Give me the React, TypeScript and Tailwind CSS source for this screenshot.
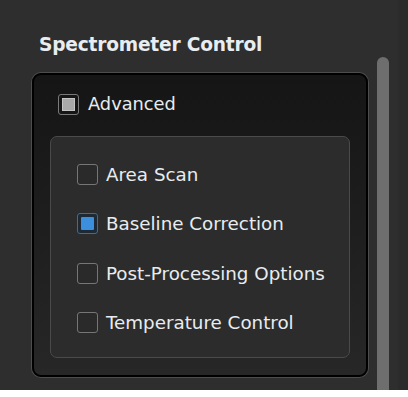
const options = [
  { label: 'Area Scan', checked: false },
  { label: 'Baseline Correction', checked: true },
  { label: 'Post-Processing Options', checked: false },
  { label: 'Temperature Control', checked: false },
];

const Box = ({ checked }: { checked: boolean }) => (
  <div
    className={
      checked
        ? 'w-[21px] h-[21px] shrink-0 rounded-[3px] border border-[#3a6d9a] bg-[#1d2a36] p-[3px]'
        : 'w-[21px] h-[21px] shrink-0 rounded-[3px] border border-[#767676] bg-[#2a2a2a]'
    }
  >
    {checked && <div className="w-full h-full rounded-[1px] bg-[#3b8fdc]" />}
  </div>
);

const App = () => {
  return (
    <div
      className="w-[408px] h-[397px] bg-white overflow-hidden"
      style={{ fontFamily: '"DejaVu Sans", Verdana, sans-serif' }}
    >
      <div className="h-[390px] bg-[#2e2e2e] flex">
        <div className="w-[377px] pl-[32px] pr-[9px] pt-[33px]">
          <h2 className="pl-[7px] text-[18.6px] leading-[24px] font-bold text-[#e8edf2] tracking-[-0.2px]">
            Spectrometer Control
          </h2>

          <div className="mt-[16px] h-[304px] rounded-[9px] border-2 border-black shadow-[0_0_0_1px_#4d4d4d] bg-gradient-to-b from-[#151515] to-[#272727] pt-[17px] px-[16px]">
            <div className="flex items-center gap-[9px] pl-[8px]">
              <div className="w-[21px] h-[21px] rounded-[3px] border border-[#7a7a7a] bg-[#161616] p-[3px]">
                <div className="w-full h-full bg-[#a9a9a9] border border-[#c4c4c4]" />
              </div>
              <span className="text-[17.8px] leading-[24px] text-[#e8ecf0]">Advanced</span>
            </div>

            <div className="mt-[20px] h-[222px] rounded-[7px] border border-[#4a4a4a] bg-[#2c2c2c] pl-[26px] pt-[27px] flex flex-col gap-[28.3px]">
              {options.map((o) => (
                <div key={o.label} className="flex items-center gap-[8px]">
                  <Box checked={o.checked} />
                  <span className="text-[18.3px] leading-[21px] text-[#e8ecf0] whitespace-nowrap">
                    {o.label}
                  </span>
                </div>
              ))}
            </div>
          </div>
        </div>

        <div className="w-[12px] mt-[57px] rounded-t-full bg-[#6e6e6e]" />
        <div className="w-[9px]" />
        <div className="flex-1 bg-[#2b2b2b]" />
      </div>
    </div>
  );
};

export default App;
